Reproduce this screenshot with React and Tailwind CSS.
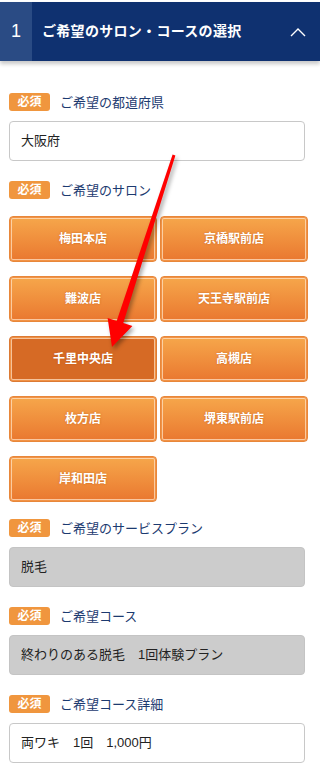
import React from 'react'

const salons = ['梅田本店', '京橋駅前店', '難波店', '天王寺駅前店', '千里中央店', '高槻店', '枚方店', '堺東駅前店', '岸和田店']
const selected = '千里中央店'

function Label({ children }) {
  return (
    <div className="flex items-center h-[18px]">
      <span className="inline-flex items-center justify-center w-[41px] h-[18px] rounded-[3px] bg-[#f0963e] text-white text-[12px] font-bold leading-none">
        必須
      </span>
      <span className="ml-[10px] text-[13px] text-[#1c3a70] leading-none">{children}</span>
    </div>
  )
}

function Field({ value, disabled }) {
  return (
    <div
      className={`mt-[10px] mr-[3px] h-[40px] flex items-center px-[11px] rounded-[4px] border text-[13px] text-[#222] ${
        disabled ? 'bg-[#cccccc] border-[#c4c4c4]' : 'bg-white border-[#c8c8c8]'
      }`}
    >
      {value}
    </div>
  )
}

export default function App() {
  return (
    <div className="relative w-[320px] min-h-[767px] bg-white font-['Liberation_Sans','Noto_Sans_CJK_JP',sans-serif]">
      {/* ヘッダー */}
      <div className="mt-[2px] h-[59px] flex bg-[#0f3170] shadow-[0_3px_4px_rgba(0,0,0,0.22)]">
        <div className="w-[32px] flex items-center justify-center bg-[#2a4b84] text-white text-[18px]">1</div>
        <div className="flex-1 flex items-center pl-[10px] text-white text-[14px] font-bold tracking-[0.3px]">
          ご希望のサロン・コースの選択
        </div>
        <div className="w-[44px] flex items-center justify-center">
          <svg width="16" height="10" viewBox="0 0 16 10" fill="none">
            <path d="M1 9 L8 2 L15 9" stroke="white" strokeWidth="1.4" />
          </svg>
        </div>
      </div>

      <div className="pl-[9px] pr-[12px] pt-[32px] pb-[4px]">
        <Label>ご希望の都道府県</Label>
        <Field value="大阪府" />

        <div className="mt-[20px]">
          <Label>ご希望のサロン</Label>
        </div>
        <div className="mt-[17px] grid grid-cols-2 gap-x-[3px] gap-y-[14px]">
          {salons.map((name) => {
            const active = name === selected
            return (
              <div
                key={name}
                className={`h-[46px] flex items-center justify-center rounded-[4px] border text-white text-[12px] font-bold [text-shadow:0_0_2px_rgba(170,70,0,0.55)] shadow-[inset_0_0_0_1px_rgba(240,140,60,0.9),inset_0_0_0_2px_rgba(255,225,195,0.75)] ${
                  active
                    ? 'bg-[#d66a25] border-[#dc7a34]'
                    : 'bg-gradient-to-b from-[#f6a74b] to-[#e9772f] border-[#e8873a]'
                }`}
              >
                {name}
              </div>
            )
          })}
        </div>

        <div className="mt-[17px]">
          <Label>ご希望のサービスプラン</Label>
        </div>
        <Field value="脱毛" disabled />

        <div className="mt-[20px]">
          <Label>ご希望コース</Label>
        </div>
        <Field value="終わりのある脱毛　1回体験プラン" disabled />

        <div className="mt-[20px]">
          <Label>ご希望コース詳細</Label>
        </div>
        <Field value="両ワキ　1回　1,000円" />
      </div>

      {/* 注釈の矢印 */}
      <svg
        className="absolute left-0 top-0 pointer-events-none [filter:drop-shadow(2px_3px_2px_rgba(0,0,0,0.35))]"
        width="320"
        height="767"
        viewBox="0 0 320 767"
      >
        <polygon
          points="175.4,153.5 123.3,321.1 132.4,324 112,345 107.6,316 116.7,318.9 172.6,152.5"
          fill="#ff0000"
        />
      </svg>
    </div>
  )
}
